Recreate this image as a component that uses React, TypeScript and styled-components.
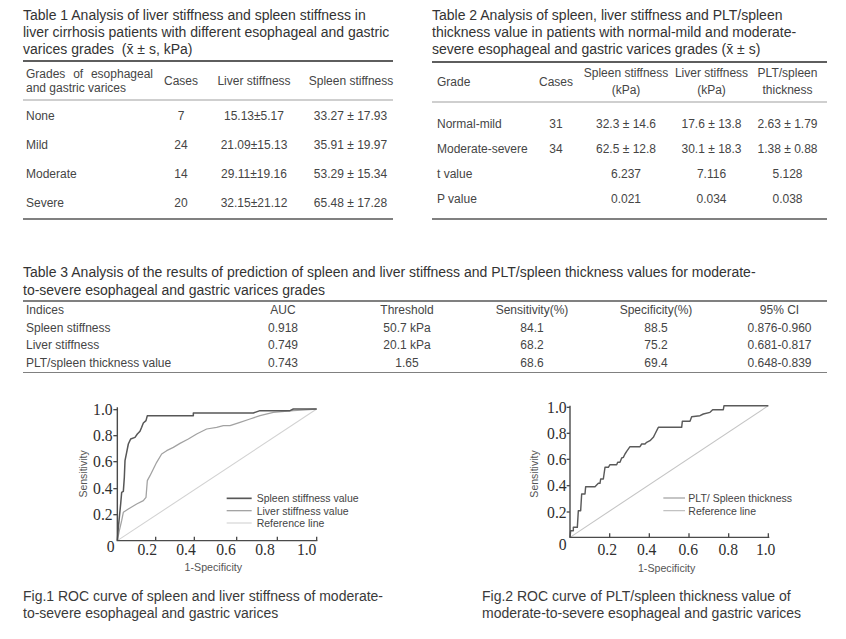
import React from 'react';
import styled, { createGlobalStyle } from 'styled-components';

const GlobalStyle = createGlobalStyle`
  html, body { margin: 0; padding: 0; background: #ffffff; }
  body { font-family: "Liberation Sans", Arial, sans-serif; color: #333; }
`;

const Page = styled.div`
  width: 846px;
  height: 639px;
  box-sizing: border-box;
  padding: 7px 19px 0 23px;
  display: flex;
  flex-direction: column;
  overflow: hidden;
`;

const TopRow = styled.div`
  display: flex;
  gap: 39px;
`;

const Block = styled.section<{ $w: number }>`
  width: ${p => p.$w}px;
  display: flex;
  flex-direction: column;
`;

const Title = styled.div<{ $lh?: number }>`
  font-size: 14px;
  line-height: ${p => p.$lh ?? 17}px;
  color: #333;
  white-space: nowrap;
`;

const Rule = styled.div<{ $tone: 'dark' | 'light' | 'mid'; $mt?: number; $h?: number }>`
  height: ${p => p.$h ?? 2}px;
  margin-top: ${p => p.$mt ?? 0}px;
  background: ${p => (p.$tone === 'dark' ? '#5e5e5e' : p.$tone === 'light' ? '#cfcfcf' : '#808080')};
`;

const Row = styled.div<{ $cols: string; $h: number; $lh?: number }>`
  display: grid;
  grid-template-columns: ${p => p.$cols};
  height: ${p => p.$h}px;
  font-size: 12px;
  line-height: ${p => p.$lh ?? 14}px;
  color: #454545;
`;

const Body = styled.div<{ $pt?: number; $pb?: number }>`
  padding-top: ${p => p.$pt ?? 0}px;
  padding-bottom: ${p => p.$pb ?? 0}px;
`;

const Cell = styled.div<{ $align?: 'left' | 'center'; $pl?: number }>`
  display: flex;
  align-items: center;
  justify-content: ${p => (p.$align === 'left' ? 'flex-start' : 'center')};
  padding-left: ${p => p.$pl ?? 0}px;
  text-align: ${p => (p.$align === 'left' ? 'left' : 'center')};
  white-space: nowrap;
`;

const Justified = styled.span`
  display: block;
  width: 127px;
  white-space: normal;
  text-align: justify;
`;

const Table3Block = styled.section`
  margin-top: 44px;
  display: flex;
  flex-direction: column;
`;

const ChartRow = styled.div`
  display: flex;
  margin-top: 21px;
  margin-left: 37px;
  gap: 140px;
`;

const ChartSvg = styled.svg`
  display: block;
  flex: none;
`;

const CaptionRow = styled.div`
  display: flex;
  margin-top: 4px;
`;

const Caption = styled.div<{ $w: number }>`
  width: ${p => p.$w}px;
  font-size: 14px;
  line-height: 17px;
  color: #3a3a3a;
  white-space: nowrap;
`;

/* ---------- Table data ---------- */

const t1Cols = '135px 46px 100px 89px';
const t1Rows = [
  ['None', '7', '15.13±5.17', '33.27 ± 17.93'],
  ['Mild', '24', '21.09±15.13', '35.91 ± 19.97'],
  ['Moderate', '14', '29.11±19.16', '53.29 ± 15.34'],
  ['Severe', '20', '32.15±21.12', '65.48 ± 17.28'],
];

const t2Cols = '103px 42px 98px 73px 79px';
const t2Rows = [
  ['Normal-mild', '31', '32.3 ± 14.6', '17.6 ± 13.8', '2.63 ± 1.79'],
  ['Moderate-severe', '34', '62.5 ± 12.8', '30.1 ± 18.3', '1.38 ± 0.88'],
  ['t value', '', '6.237', '7.116', '5.128'],
  ['P value', '', '0.021', '0.034', '0.038'],
];

const t3Cols = '213px 94px 154px 96px 152px 95px';
const t3Head = ['Indices', 'AUC', 'Threshold', 'Sensitivity(%)', 'Specificity(%)', '95% CI'];
const t3Rows = [
  ['Spleen stiffness', '0.918', '50.7 kPa', '84.1', '88.5', '0.876-0.960'],
  ['Liver stiffness', '0.749', '20.1 kPa', '68.2', '75.2', '0.681-0.817'],
  ['PLT/spleen thickness value', '0.743', '1.65', '68.6', '69.4', '0.648-0.839'],
];

/* ---------- Chart config (units = 3x page px) ---------- */

type Pt = [number, number];
interface Series { pts: Pt[]; color: string; sw: number }
interface LegendItem { label: string; y: number; color: string; sw: number }
interface ChartCfg {
  w: number; h: number;
  ax: number; ay: number; top: number; right: number;
  yLabels: { t: string; y: number }[]; yLabelX: number; yTickFrom: number;
  zero: { x: number; y: number };
  xLabels: { t: string; x: number }[]; xLabelY: number; xTicks: number[];
  sens: { x: number; y: number }; spec: { x: number; y: number };
  legend: { x1: number; x2: number; tx: number; items: LegendItem[] };
  series: Series[];
}

const chart1: ChartCfg = {
  w: 320, h: 190,
  ax: 172, ay: 440, top: 40, right: 772,
  yLabels: [
    { t: '1.0', y: 47 }, { t: '0.8', y: 125 }, { t: '0.6', y: 203 }, { t: '0.4', y: 284 }, { t: '0.2', y: 362 },
  ],
  yLabelX: 158, yTickFrom: 160,
  zero: { x: 152, y: 457 },
  xLabels: [
    { t: '0.2', x: 262 }, { t: '0.4', x: 378 }, { t: '0.6', x: 498 }, { t: '0.8', x: 615 }, { t: '1.0', x: 740 },
  ],
  xLabelY: 467,
  xTicks: [287, 403, 530, 652, 770],
  sens: { x: 68, y: 240 }, spec: { x: 460, y: 520 },
  legend: {
    x1: 500, x2: 575, tx: 590,
    items: [
      { label: 'Spleen stiffness value', y: 313, color: '#585858', sw: 5 },
      { label: 'Liver stiffness value', y: 350, color: '#a4a4a4', sw: 4 },
      { label: 'Reference line', y: 387, color: '#d4d4d4', sw: 3.5 },
    ],
  },
  series: [
    { color: '#d2d2d2', sw: 3.2, pts: [[172, 440], [770, 45]] },
    {
      color: '#a2a2a2', sw: 3.8,
      pts: [[172, 440], [178, 410], [185, 380], [190, 355], [205, 345], [230, 330], [250, 320], [258, 310], [262, 260],
        [270, 245], [280, 225], [290, 205], [305, 180], [320, 170], [340, 160], [360, 148], [385, 135], [410, 120],
        [440, 105], [470, 100], [490, 95], [510, 95], [540, 85], [570, 75], [600, 65], [640, 55], [700, 50], [770, 45]],
    },
    {
      color: '#575757', sw: 4.5,
      pts: [[172, 440], [175, 400], [178, 370], [182, 330], [185, 295], [190, 292], [193, 250], [195, 200], [200, 175],
        [205, 150], [212, 135], [225, 130], [232, 120], [240, 112], [245, 100], [250, 87], [258, 80], [262, 65],
        [400, 65], [400, 57], [580, 57], [600, 50], [690, 50], [700, 45], [770, 45]],
    },
  ],
};

const chart2: ChartCfg = {
  w: 280, h: 190,
  ax: 150, ay: 430, top: 35, right: 748,
  yLabels: [
    { t: '1.0', y: 40 }, { t: '0.8', y: 118 }, { t: '0.6', y: 196 }, { t: '0.4', y: 275 }, { t: '0.2', y: 354 },
  ],
  yLabelX: 140, yTickFrom: 140,
  zero: { x: 128, y: 452 },
  xLabels: [
    { t: '0.2', x: 262 }, { t: '0.4', x: 380 }, { t: '0.6', x: 505 }, { t: '0.8', x: 625 }, { t: '1.0', x: 737 },
  ],
  xLabelY: 465,
  xTicks: [269, 388, 507, 626, 745],
  sens: { x: 42, y: 240 }, spec: { x: 440, y: 522 },
  legend: {
    x1: 430, x2: 495, tx: 505,
    items: [
      { label: 'PLT/ Spleen thickness', y: 312, color: '#a8a8a8', sw: 4 },
      { label: 'Reference line', y: 350, color: '#bdbdbd', sw: 3.5 },
    ],
  },
  series: [
    { color: '#c4c4c4', sw: 3.2, pts: [[150, 430], [745, 35]] },
    {
      color: '#5a5a5a', sw: 4.3,
      pts: [[150, 430], [152, 410], [160, 410], [160, 400], [172, 400], [175, 350], [182, 350], [185, 300], [195, 300],
        [197, 278], [225, 278], [235, 268], [240, 268], [242, 255], [250, 255], [255, 220], [265, 220], [270, 212],
        [290, 212], [293, 205], [300, 205], [305, 192], [310, 190], [315, 180], [320, 172], [330, 158], [360, 158],
        [365, 150], [375, 150], [380, 145], [390, 140], [400, 130], [405, 120], [415, 100], [485, 100], [487, 82],
        [510, 82], [515, 68], [540, 65], [550, 60], [570, 55], [578, 47], [610, 47], [612, 35], [745, 35]],
    },
  ],
};

const serif = '"Liberation Serif", "Times New Roman", serif';
const sans = '"Liberation Sans", Arial, sans-serif';

function RocChart({ c }: { c: ChartCfg }) {
  return (
    <ChartSvg width={c.w} height={c.h} viewBox={`0 0 ${c.w * 3} ${c.h * 3}`}>
      {c.series.map((s, i) => (
        <polyline key={i} points={s.pts.map(p => p.join(',')).join(' ')} fill="none" stroke={s.color}
          strokeWidth={s.sw} strokeLinejoin="round" />
      ))}
      <polyline points={`${c.ax},${c.top} ${c.ax},${c.ay} ${c.right},${c.ay}`} fill="none" stroke="#4a4a4a" strokeWidth={4.2} />
      {c.yLabels.map(l => (
        <g key={l.t}>
          <line x1={c.yTickFrom} x2={c.ax} y1={l.y} y2={l.y} stroke="#4a4a4a" strokeWidth={4} />
          <text x={c.yLabelX} y={l.y} textAnchor="end" dominantBaseline="central" fontFamily={serif}
            fontSize={47} fill="#2e2e2e">{l.t}</text>
        </g>
      ))}
      <text x={c.zero.x} y={c.zero.y} textAnchor="middle" dominantBaseline="central" fontFamily={serif}
        fontSize={47} fill="#2e2e2e">0</text>
      {c.xTicks.map(x => (
        <line key={x} x1={x} x2={x} y1={c.ay} y2={c.ay - 12} stroke="#4a4a4a" strokeWidth={4} />
      ))}
      {c.xLabels.map(l => (
        <text key={l.t} x={l.x} y={c.xLabelY} textAnchor="middle" dominantBaseline="central" fontFamily={serif}
          fontSize={47} fill="#2e2e2e">{l.t}</text>
      ))}
      <text x={c.sens.x} y={c.sens.y} transform={`rotate(-90 ${c.sens.x} ${c.sens.y})`} textAnchor="middle"
        dominantBaseline="central" fontFamily={sans} fontSize={31.5} fill="#555">Sensitivity</text>
      <text x={c.spec.x} y={c.spec.y} textAnchor="middle" dominantBaseline="central" fontFamily={sans}
        fontSize={32} fill="#555">1-Specificity</text>
      {c.legend.items.map(it => (
        <g key={it.label}>
          <line x1={c.legend.x1} x2={c.legend.x2} y1={it.y} y2={it.y} stroke={it.color} strokeWidth={it.sw} />
          <text x={c.legend.tx} y={it.y} dominantBaseline="central" fontFamily={sans} fontSize={31.5}
            fill="#444">{it.label}</text>
        </g>
      ))}
    </ChartSvg>
  );
}

export default function App() {
  return (
    <>
      <GlobalStyle />
      <Page>
        <TopRow>
          <Block $w={370}>
            <Title>
              Table 1 Analysis of liver stiffness and spleen stiffness in<br />
              liver cirrhosis patients with different esophageal and gastric<br />
              varices grades&nbsp;&nbsp;(x̄ ± s, kPa)
            </Title>
            <Rule $tone="dark" $mt={2} />
            <Row $cols={t1Cols} $h={37}>
              <Cell $align="left" $pl={3}><Justified>Grades of esophageal and gastric varices</Justified></Cell>
              <Cell>Cases</Cell>
              <Cell>Liver stiffness</Cell>
              <Cell $pl={5}>Spleen stiffness</Cell>
            </Row>
            <Rule $tone="light" />
            <Body>
              {t1Rows.map(r => (
                <Row key={r[0]} $cols={t1Cols} $h={29}>
                  {r.map((v, i) => (
                    <Cell key={i} $align={i === 0 ? 'left' : 'center'} $pl={i === 0 ? 3 : i === 3 ? 4 : 0}>{v}</Cell>
                  ))}
                </Row>
              ))}
            </Body>
            <Rule $tone="mid" $mt={1} />
          </Block>
          <Block $w={395}>
            <Title>
              Table 2 Analysis of spleen, liver stiffness and PLT/spleen<br />
              thickness value in patients with normal-mild and moderate-<br />
              severe esophageal and gastric varices grades (x̄ ± s)
            </Title>
            <Rule $tone="dark" $mt={3} />
            <Row $cols={t2Cols} $h={38} $lh={17}>
              <Cell $align="left" $pl={5}>Grade</Cell>
              <Cell>Cases</Cell>
              <Cell>Spleen stiffness<br />(kPa)</Cell>
              <Cell>Liver stiffness<br />(kPa)</Cell>
              <Cell>PLT/spleen<br />thickness</Cell>
            </Row>
            <Rule $tone="light" />
            <Body $pt={8} $pb={7}>
              {t2Rows.map(r => (
                <Row key={r[0]} $cols={t2Cols} $h={25}>
                  {r.map((v, i) => (
                    <Cell key={i} $align={i === 0 ? 'left' : 'center'} $pl={i === 0 ? 5 : 0}>{v}</Cell>
                  ))}
                </Row>
              ))}
            </Body>
            <Rule $tone="mid" />
          </Block>
        </TopRow>

        <Table3Block>
          <Title $lh={17.5}>
            Table 3 Analysis of the results of prediction of spleen and liver stiffness and PLT/spleen thickness values for moderate-<br />
            to-severe esophageal and gastric varices grades
          </Title>
          <Rule $tone="mid" $mt={1} $h={1.5} />
          <Row $cols={t3Cols} $h={17.5}>
            {t3Head.map((v, i) => (
              <Cell key={v} $align={i === 0 ? 'left' : 'center'} $pl={i === 0 ? 3 : 0}>{v}</Cell>
            ))}
          </Row>
          {t3Rows.map(r => (
            <Row key={r[0]} $cols={t3Cols} $h={17.5}>
              {r.map((v, i) => (
                <Cell key={i} $align={i === 0 ? 'left' : 'center'} $pl={i === 0 ? 3 : 0}>{v}</Cell>
              ))}
            </Row>
          ))}
          <Rule $tone="mid" $h={1.5} />
        </Table3Block>

        <ChartRow>
          <RocChart c={chart1} />
          <RocChart c={chart2} />
        </ChartRow>

        <CaptionRow>
          <Caption $w={459}>
            Fig.1 ROC curve of spleen and liver stiffness of moderate-<br />
            to-severe esophageal and gastric varices
          </Caption>
          <Caption $w={340}>
            Fig.2 ROC curve of PLT/spleen thickness value of<br />
            moderate-to-severe esophageal and gastric varices
          </Caption>
        </CaptionRow>
      </Page>
    </>
  );
}
